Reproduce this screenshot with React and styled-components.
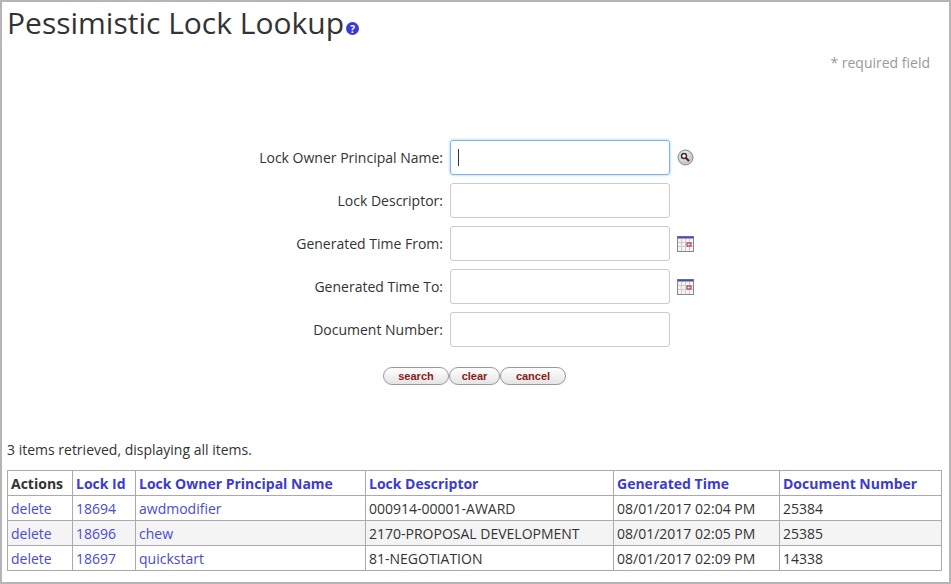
import React from 'react';
import styled, { createGlobalStyle } from 'styled-components';

const Global = createGlobalStyle`
  html, body { margin: 0; padding: 0; background: #fff; }
  body { font-family: "Open Sans", "Liberation Sans", sans-serif; color: #333; }
`;

const Frame = styled.div`
  width: 951px;
  height: 584px;
  box-sizing: border-box;
  border: 2px solid #b5b5b5;
  padding: 0 7px 0 5px;
  overflow: hidden;
`;

const Title = styled.h1`
  margin: 0;
  padding-top: 2px;
  font-weight: 400;
  font-size: 30px;
  line-height: 38px;
  color: #333;
  display: flex;
  align-items: flex-end;
`;

const HelpIcon = styled.span`
  display: inline-flex;
  width: 13px;
  height: 13px;
  border-radius: 50%;
  background: #3b3bd0;
  color: #fff;
  font-size: 10px;
  font-weight: 700;
  align-items: center;
  justify-content: center;
  margin: 0 0 7px 2px;
`;

const Required = styled.div`
  text-align: right;
  font-size: 14px;
  color: #999;
  margin-top: 11px;
  margin-right: 12px;
`;

const Form = styled.div`
  margin-top: 68px;
  display: grid;
  grid-template-columns: 436px 220px 24px;
  column-gap: 7px;
  row-gap: 8px;
  align-items: center;
`;

const Label = styled.label`
  text-align: right;
  font-size: 14px;
  color: #333;
`;

const Input = styled.div`
  height: 35px;
  box-sizing: border-box;
  border: 1px solid ${p => (p.focus ? '#7fb2e6' : '#ccc')};
  box-shadow: ${p => (p.focus ? '0 0 3px #9cc7f0' : 'none')};
  border-radius: 3px;
  display: flex;
  align-items: center;
  padding-left: 7px;
`;

const Caret = styled.span`
  width: 1px;
  height: 17px;
  background: #333;
`;

const Buttons = styled.div`
  display: flex;
  margin: 20px 0 0 376px;
`;

const Btn = styled.button`
  height: 18px;
  width: ${p => p.w}px;
  padding: 0;
  border: 1px solid #999;
  border-radius: 9px;
  background: linear-gradient(#fff, #e4e4e4);
  color: #8b1a1a;
  font-family: "Liberation Sans", sans-serif;
  font-weight: 700;
  font-size: 11px;
  line-height: 16px;
`;

const Count = styled.div`
  font-size: 14px;
  margin-top: 55px;
`;

const Table = styled.table`
  margin-top: 11px;
  width: 935px;
  border-collapse: collapse;
  font-size: 14px;
  td, th { border: 1px solid #aaa; padding: 0 3px; height: 24px; text-align: left; white-space: nowrap; }
  th { font-weight: 700; color: #3b3bd0; }
  th:first-child { color: #333; }
  tr:nth-child(even) td { background: #f4f4f4; }
`;

const Link = styled.span`
  color: #4a4ad6;
`;

const Search = () => (
  <svg width="17" height="17" viewBox="0 0 17 17">
    <defs>
      <radialGradient id="g" cx="40%" cy="35%"><stop offset="0" stopColor="#fff" /><stop offset="1" stopColor="#c8c8c8" /></radialGradient>
    </defs>
    <circle cx="8.5" cy="8.5" r="7.5" fill="url(#g)" stroke="#888" />
    <circle cx="7" cy="7" r="2.5" fill="none" stroke="#333" strokeWidth="1.5" />
    <path d="M8.7 8.7 L12 12" stroke="#7a1010" strokeWidth="2" />
  </svg>
);

const Cal = () => (
  <svg width="17" height="16" viewBox="0 0 17 16">
    <rect x="0.5" y="0.5" width="16" height="15" fill="#f4f4f4" stroke="#888" />
    <rect x="0.5" y="0.5" width="16" height="2" fill="#4a4ab0" />
    <path d="M4.5 3v12M8.5 3v12M12.5 3v12M1 6.5h15M1 10.5h15" stroke="#ccc" />
    <rect x="10" y="7" width="4" height="3" fill="none" stroke="#b02020" />
  </svg>
);

const rows = [
  ['18694', 'awdmodifier', '000914-00001-AWARD', '08/01/2017 02:04 PM', '25384'],
  ['18696', 'chew', '2170-PROPOSAL DEVELOPMENT', '08/01/2017 02:05 PM', '25385'],
  ['18697', 'quickstart', '81-NEGOTIATION', '08/01/2017 02:09 PM', '14338'],
];

export default function App() {
  return (
    <Frame>
      <Global />
      <Title>Pessimistic Lock Lookup<HelpIcon>?</HelpIcon></Title>
      <Required>* required field</Required>
      <Form>
        <Label>Lock Owner Principal Name:</Label><Input focus><Caret /></Input><Search />
        <Label>Lock Descriptor:</Label><Input /><span />
        <Label>Generated Time From:</Label><Input /><Cal />
        <Label>Generated Time To:</Label><Input /><Cal />
        <Label>Document Number:</Label><Input /><span />
      </Form>
      <Buttons>
        <Btn w={66}>search</Btn>
        <Btn w={51}>clear</Btn>
        <Btn w={66}>cancel</Btn>
      </Buttons>
      <Count>3 items retrieved, displaying all items.</Count>
      <Table>
        <colgroup>
          <col style={{ width: 65 }} /><col style={{ width: 63 }} /><col style={{ width: 230 }} />
          <col style={{ width: 248 }} /><col style={{ width: 166 }} /><col />
        </colgroup>
        <thead>
          <tr><th>Actions</th><th>Lock Id</th><th>Lock Owner Principal Name</th><th>Lock Descriptor</th><th>Generated Time</th><th>Document Number</th></tr>
        </thead>
        <tbody>
          {rows.map(r => (
            <tr key={r[0]}>
              <td><Link>delete</Link></td><td><Link>{r[0]}</Link></td><td><Link>{r[1]}</Link></td>
              <td>{r[2]}</td><td>{r[3]}</td><td>{r[4]}</td>
            </tr>
          ))}
        </tbody>
      </Table>
    </Frame>
  );
}
